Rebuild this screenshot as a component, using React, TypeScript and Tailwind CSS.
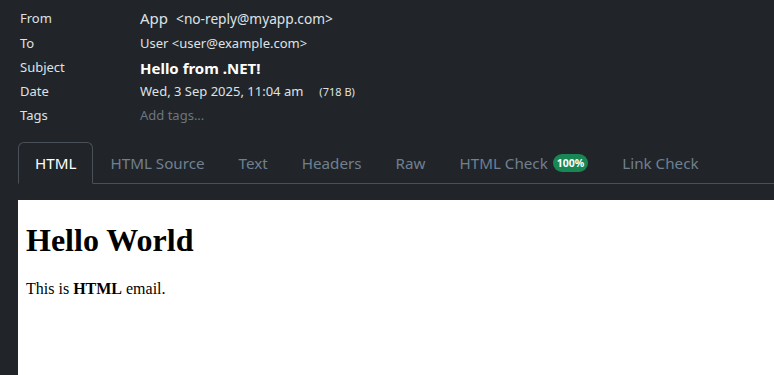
import React from "react";

const tabs = ["HTML", "HTML Source", "Text", "Headers", "Raw", "HTML Check", "Link Check"];

function MetaRow({ label, children, tall }: { label: string; children: React.ReactNode; tall?: boolean }) {
  return (
    <div className={tall ? "flex items-center h-[27px]" : "flex items-center h-6"}>
      <div className="w-[120px] shrink-0 text-[13px] text-[#dee2e6]">{label}</div>
      <div className="flex items-baseline text-[13px] text-[#dee2e6]">{children}</div>
    </div>
  );
}

export default function App() {
  return (
    <div
      className="w-[774px] h-[375px] overflow-hidden bg-[#212529] text-[#dee2e6]"
      style={{ fontFamily: '"Noto Sans", "Open Sans", sans-serif' }}
    >
      <div className="pl-5 pt-[5px]">
        <MetaRow label="From" tall>
          <span className="text-[15px] mr-2">App</span>
          <span className="text-[13.7px]">&lt;no-reply@myapp.com&gt;</span>
        </MetaRow>
        <MetaRow label="To">
          <span>User &lt;user@example.com&gt;</span>
        </MetaRow>
        <MetaRow label="Subject">
          <span className="text-[15px] font-bold text-white">Hello from .NET!</span>
        </MetaRow>
        <MetaRow label="Date">
          <span>Wed, 3 Sep 2025, 11:04 am</span>
          <span className="ml-4 text-[11px]">(718 B)</span>
        </MetaRow>
        <MetaRow label="Tags">
          <span className="text-[#6c757d]">Add tags...</span>
        </MetaRow>
      </div>

      <div className="pl-[18px] mt-[14px]">
        <ul className="flex border-b border-[#495057]">
          {tabs.map((t, i) => (
            <li key={t} className="-mb-px">
              <div
                className={
                  i === 0
                    ? "flex items-center px-4 py-2 text-[15.2px] leading-6 text-white border border-[#495057] border-b-[#212529] rounded-t-md"
                    : "flex items-center px-4 py-2 text-[15.2px] leading-6 text-[#6f8091] border border-transparent"
                }
              >
                {t}
                {t === "HTML Check" && (
                  <span className="ml-[5px] rounded-full bg-[#198754] px-[4px] py-[2px] text-[10.5px] leading-[14px] font-bold text-white">
                    100%
                  </span>
                )}
              </div>
            </li>
          ))}
        </ul>
        <div
          className="mt-4 h-[200px] bg-white text-black px-2"
          style={{ fontFamily: '"Liberation Serif", "Times New Roman", serif' }}
        >
          <h1 className="text-[32px] font-bold pt-[22px] leading-[37px]">Hello World</h1>
          <p className="text-base mt-[18px]">
            This is <b>HTML</b> email.
          </p>
        </div>
      </div>
    </div>
  );
}
